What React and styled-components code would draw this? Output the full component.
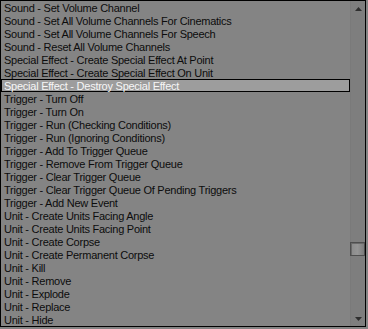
import React from "react";
import styled, { createGlobalStyle } from "styled-components";

const GlobalStyle = createGlobalStyle`
  html, body {
    margin: 0;
    padding: 0;
    background: #848484;
  }
  body {
    font-family: "Liberation Sans", Arial, sans-serif;
  }
`;

const items = [
  "Sound - Set Volume Channel",
  "Sound - Set All Volume Channels For Cinematics",
  "Sound - Set All Volume Channels For Speech",
  "Sound - Reset All Volume Channels",
  "Special Effect - Create Special Effect At Point",
  "Special Effect - Create Special Effect On Unit",
  "Special Effect - Destroy Special Effect",
  "Trigger - Turn Off",
  "Trigger - Turn On",
  "Trigger - Run (Checking Conditions)",
  "Trigger - Run (Ignoring Conditions)",
  "Trigger - Add To Trigger Queue",
  "Trigger - Remove From Trigger Queue",
  "Trigger - Clear Trigger Queue",
  "Trigger - Clear Trigger Queue Of Pending Triggers",
  "Trigger - Add New Event",
  "Unit - Create Units Facing Angle",
  "Unit - Create Units Facing Point",
  "Unit - Create Corpse",
  "Unit - Create Permanent Corpse",
  "Unit - Kill",
  "Unit - Remove",
  "Unit - Explode",
  "Unit - Replace",
  "Unit - Hide",
];

const ListBox = styled.div`
  display: flex;
  width: 366px;
  height: 327px;
  box-sizing: border-box;
  border: 1px solid #000;
  background: #848484;
  overflow: hidden;
`;

const List = styled.ul`
  flex: 1;
  margin: 0;
  padding: 0;
  list-style: none;
  overflow: hidden;
`;

const Row = styled.li`
  height: 13px;
  box-sizing: border-box;
  padding: ${({ $selected }) => ($selected ? "1px 0 0 2px" : "2px 0 0 3px")};
  border: ${({ $selected }) => ($selected ? "1px solid #000" : "none")};
  background: ${({ $selected }) => ($selected ? "#9d9d9d" : "transparent")};
  color: ${({ $selected }) => ($selected ? "#f6f6f6" : "#0c0c0c")};
  font-size: 11px;
  line-height: 11px;
  letter-spacing: -0.25px;
  white-space: nowrap;
`;

const ScrollBar = styled.div`
  width: 15px;
  display: flex;
  flex-direction: column;
  align-items: center;
  background: #7e7e7e;
  border-left: 1px solid #7a7a7a;
  box-sizing: border-box;
`;

const Arrow = styled.div`
  height: 15px;
  width: 100%;
  display: flex;
  align-items: center;
  justify-content: center;
`;

const Track = styled.div`
  flex: 1;
  width: 100%;
  display: flex;
  flex-direction: column;
`;

const Thumb = styled.div`
  width: 15px;
  height: 14px;
  margin: ${({ $offset }) => `${$offset}px 0 0 -1px`};
  box-sizing: border-box;
  border: 1px solid #4e4e4e;
  background: linear-gradient(to right, #8a8a8a, #959595 50%, #7c7c7c);
  box-shadow: inset 1px 1px 0 #6a6a6a;
`;

const Triangle = ({ down }) => (
  <svg width="7" height="4" viewBox="0 0 7 4">
    <polygon
      points={down ? "0,0 7,0 3.5,4" : "3.5,0 7,4 0,4"}
      fill="#2e2e2e"
    />
  </svg>
);

export default function App() {
  return (
    <>
      <GlobalStyle />
      <ListBox>
        <List>
          {items.map((text, i) => (
            <Row key={i} $selected={i === 6}>
              {text}
            </Row>
          ))}
        </List>
        <ScrollBar>
          <Arrow>
            <Triangle />
          </Arrow>
          <Track>
            <Thumb $offset={226} />
          </Track>
          <Arrow>
            <Triangle down />
          </Arrow>
        </ScrollBar>
      </ListBox>
    </>
  );
}
